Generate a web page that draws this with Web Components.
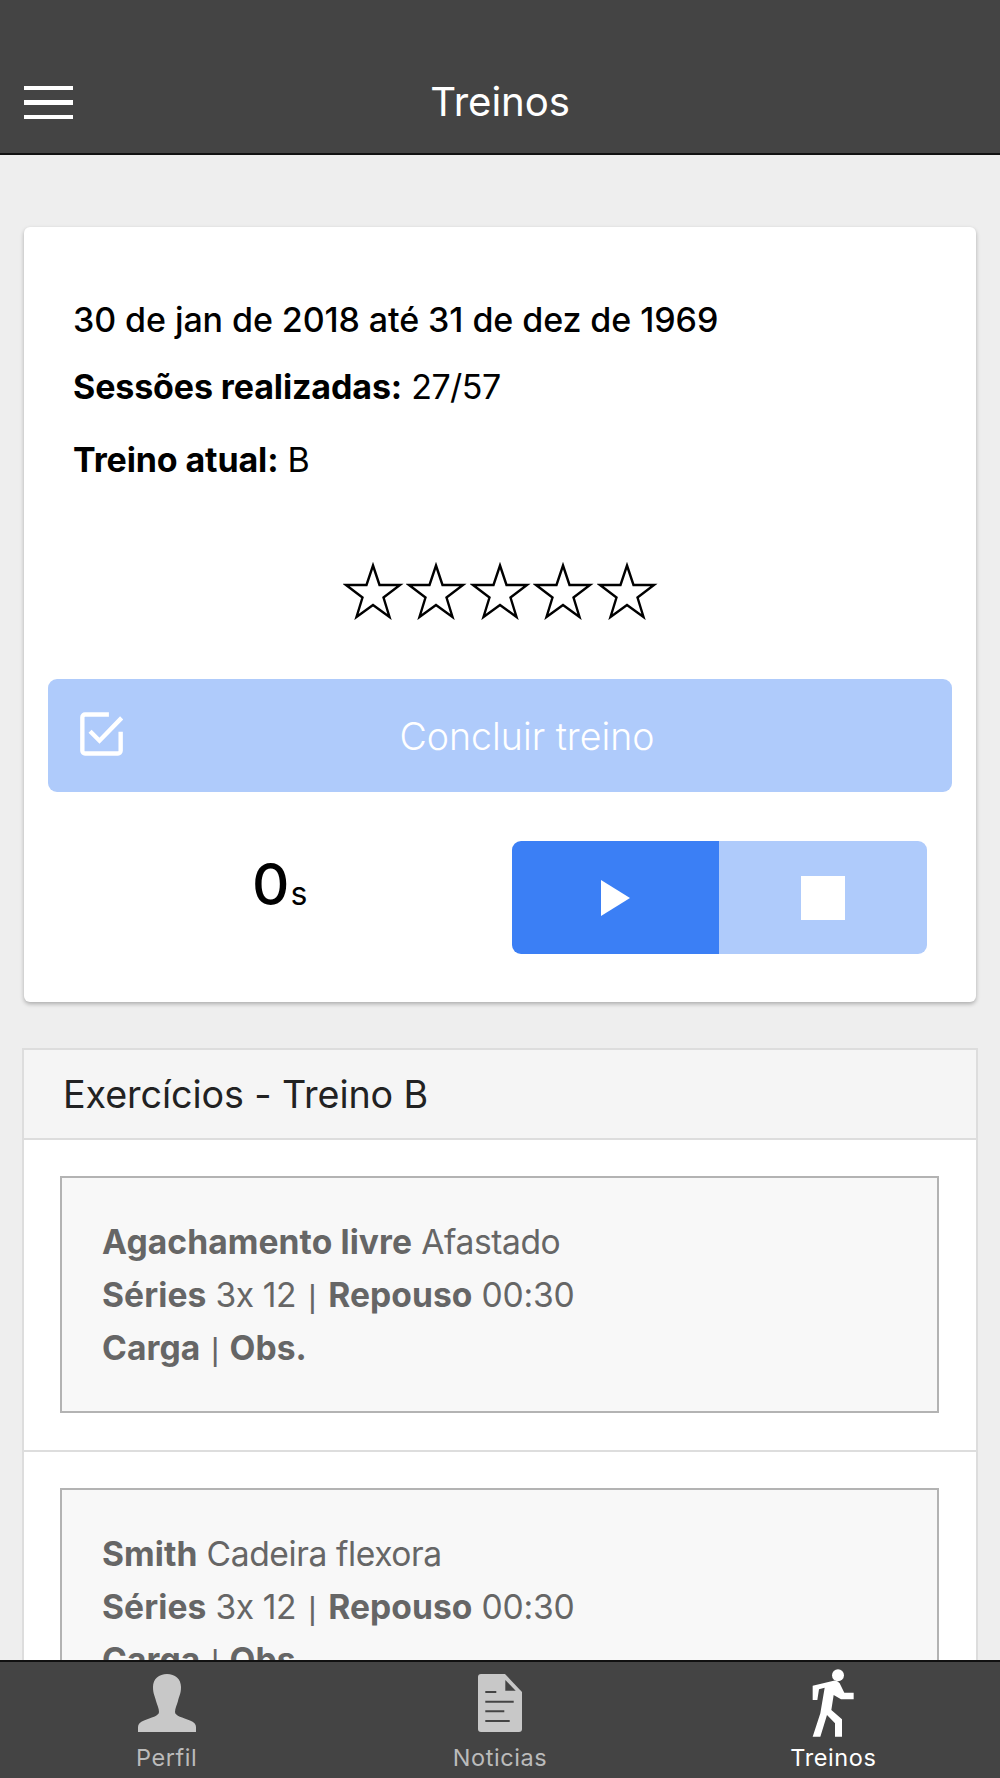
<!DOCTYPE html>
<html lang="pt">
<head>
<meta charset="utf-8">
<title>Treinos</title>
<style>
html,body{margin:0;padding:0;background:#eee}
body{font-family:Inter,"Noto Sans",sans-serif}
</style>
</head>
<body>
<app-shell>
  <app-header slot="header" title-text="Treinos"></app-header>
  <summary-card></summary-card>
  <exercise-panel heading="Exercícios - Treino B">
    <exercise-item name="Agachamento livre" variant="Afastado"></exercise-item>
    <exercise-item name="Smith" variant="Cadeira flexora"></exercise-item>
  </exercise-panel>
  <tab-bar slot="footer"></tab-bar>
</app-shell>
<script>
function def(name, html, init){
  customElements.define(name, class extends HTMLElement{
    connectedCallback(){
      if(this.shadowRoot) return;
      const r=this.attachShadow({mode:'open'});
      r.innerHTML = typeof html==='function' ? html(this) : html;
      if(init) init(r,this);
    }
  });
}
def('app-shell',`<style>
:host{display:flex;flex-direction:column;width:1000px;height:1778px;overflow:hidden;background:#eee}
.main{flex:1;min-height:0;overflow:hidden;padding:72px 22px 0;box-sizing:border-box}
</style><slot name="header"></slot><div class="main"><slot></slot></div><slot name="footer"></slot>`);

def('app-header',el=>`<style>
:host{display:block;flex:none}
.bar{height:153px;box-sizing:content-box;background:#444;border-bottom:2px solid #111;display:flex;align-items:flex-end;position:relative;color:#fff}
.menu{display:flex;flex-direction:column;gap:10px;width:49px;margin:0 0 34px 24px}
.menu i{display:block;height:4.5px;background:#fff}
h1{position:absolute;left:0;right:0;top:75px;margin:0;text-align:center;font:400 40.200px/54px Inter,sans-serif;letter-spacing:-.1px}
</style><div class="bar"><div class="menu"><i></i><i></i><i></i></div><h1>${el.getAttribute('title-text')}</h1></div>`);

const star=`<svg width="63.5" height="58" viewBox="0 0 63.5 58" aria-hidden="true"><polygon points="30,3.5 36.5,23 57,23 40.5,35.5 46.5,55 30,43 13.5,55 19.5,35.5 3,23 23.5,23" fill="none" stroke="#000" stroke-width="2.4"/></svg>`;

def('summary-card',`<style>
:host{display:block;margin:0 2px 46px}
.card{background:#fff;border-radius:6px;box-shadow:0 2px 4px rgba(0,0,0,.28);padding:73px 24px 48px;height:775px;box-sizing:border-box}
p{margin:0 0 0 25px;font:400 34px/40px Inter,sans-serif;color:#000;letter-spacing:-.5px}
p.d{font-weight:500;letter-spacing:-.08px}
b{font-weight:700;letter-spacing:-.12px}
.r2{margin-top:27px}.r3{margin-top:33px}
.stars{display:flex;justify-content:center;margin:82px 0 0 3px;line-height:0}
.done{margin-top:59px;height:113px;border-radius:9px;background:#afcbfb;position:relative;display:flex;align-items:center;justify-content:center;color:#fff;font:300 37.500px/1 Inter,sans-serif;padding:2px 0 0 54px;box-sizing:border-box}
.done svg{position:absolute;left:32px;top:33px}
.row{display:flex;margin-top:49px;align-items:flex-start}
.time{width:464px;padding-left:204px;margin-top:14px;box-sizing:border-box;font:500 58px/1 Inter,sans-serif;color:#000;white-space:nowrap}
.time small{font-size:32px;font-weight:400;margin-left:1px}
.ctl{display:flex;width:415px;height:113px;border-radius:9px;overflow:hidden}
.ctl div{display:flex;align-items:center;justify-content:center}
.play{width:207px;background:#3b7ff5}
.stop{flex:1;background:#afcbfb}
.stop i{display:block;width:44px;height:44px;background:#fff}
</style><div class="card">
<p class="d">30 de jan de 2018 até 31 de dez de 1969</p>
<p class="r2"><b>Sessões realizadas:</b> 27/57</p>
<p class="r3"><b>Treino atual:</b> B</p>
<div class="stars">${star.repeat(5)}</div>
<div class="done"><svg width="43" height="44" viewBox="90 95 128 130" aria-hidden="true"><path d="M176 102H105a8 8 0 0 0-8 8V210a8 8 0 0 0 8 8H203a8 8 0 0 0 8-8V153" fill="none" stroke="#fff" stroke-width="13"/><path d="M120 152L148 180L214 112" fill="none" stroke="#fff" stroke-width="13"/></svg>Concluir treino</div>
<div class="row"><div class="time">0<small>s</small></div>
<div class="ctl"><div class="play"><svg width="29" height="36" viewBox="0 0 29 36" aria-hidden="true"><polygon points="0,0 29,18 0,36" fill="#fff"/></svg></div><div class="stop"><i></i></div></div></div>
</div>`);

def('exercise-panel',el=>`<style>
:host{display:block;border:2px solid #ddd;background:#fff}
.h{background:#f5f5f5;border-bottom:2px solid #ddd;display:flex;align-items:center;padding:2px 0 0 39px;box-sizing:border-box;height:90px;font:400 37.700px/1 Inter,sans-serif;color:#222;letter-spacing:-.1px}
</style><div class="h">${el.getAttribute('heading')}</div><slot></slot>`);

def('exercise-item',el=>`<style>
:host{display:block;padding:36px 37px 37px 36px;border-bottom:2px solid #ddd}
.box{border:2px solid #b3b3b3;background:#f8f8f8;height:237px;box-sizing:border-box;padding:37px 40px;font:400 33.600px/53px Inter,sans-serif;color:#666;letter-spacing:-.4px}
b{font-weight:700;letter-spacing:.1px}
i{font:400 32px/1 "Liberation Sans",sans-serif;padding:0 1.500px}
i.w{padding:0 3px}
.n{letter-spacing:-.2px}
</style><div class="box"><div><b>${el.getAttribute('name')}</b> ${el.getAttribute('variant')}</div>
<div><b>Séries</b> 3x 12 <i class="w">|</i> <b>Repouso</b> <span class="n">00:30</span></div>
<div><b>Carga</b> <i>|</i> <b>Obs.</b></div></div>`);

def('tab-bar',`<style>
:host{display:block;flex:none}
.bar{height:116px;background:#444;border-top:2px solid #111;display:grid;grid-template-columns:repeat(3,1fr);position:relative;z-index:1}
.t{display:flex;flex-direction:column;align-items:center;color:#bbb;font:400 23.500px/28px Inter,sans-serif;letter-spacing:.6px;position:relative}
.t svg{display:block;position:absolute;left:50%}
.t span{position:absolute;top:82px;left:0;right:0;text-align:center}
.on{color:#fff}
</style><div class="bar">
<div class="t"><svg style="margin-left:-29px;top:12px" width="58" height="58" viewBox="0 0 58 58" aria-hidden="true"><path fill="#c8c8c8" d="M29 0C37 0 43 5 43 13C43 20 41 22 40 27C39 31 37 34 37 38C37 42 45 43.500 52 46.500C56 48 58 50 58 53L58 58L0 58L0 53C0 50 2 48 6 46.500C13 43.500 21 42 21 38C21 34 19 31 18 27C17 22 15 20 15 13C15 5 21 0 29 0Z"/></svg><span>Perfil</span></div>
<div class="t"><svg style="margin-left:-22px;top:12px" width="44" height="58" viewBox="0 0 44 58" aria-hidden="true"><path fill="#c8c8c8" d="M3 0H27L44 18V55a3 3 0 0 1-3 3H3a3 3 0 0 1-3-3V3a3 3 0 0 1 3-3Z"/><path fill="#444" d="M27.300 6V16.700H37.700Z"/><path stroke="#444" stroke-width="2" d="M7.300 18H18.300M7.300 27.700H35.700M7.300 37.300H26.300M7.300 47H31.700"/></svg><span>Noticias</span></div>
<div class="t on"><svg style="margin-left:-21px;top:7px" width="42" height="68" viewBox="125 57 126 204" aria-hidden="true"><circle cx="203" cy="76" r="18" fill="#fff"/><path fill="#fff" d="M190 92L127 107L127 150L141 150L146 118L163 113L150 190L127 260L150 260L170 195L194 220L194 260L215 260L215 208L183 180L190 135L212 148L250 148L250 128L222 128L208 100Q200 90 190 92Z"/></svg><span>Treinos</span></div>
</div>`);
</script>
</body>
</html>
